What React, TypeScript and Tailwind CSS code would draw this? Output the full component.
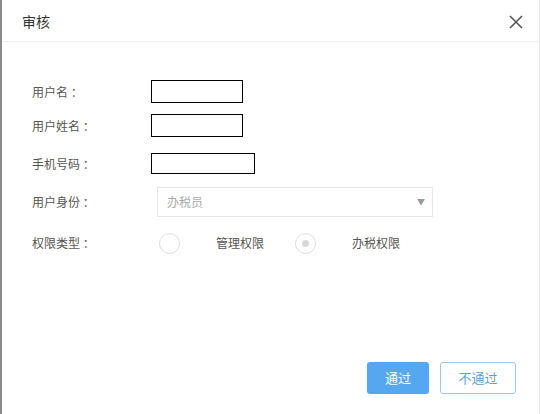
import React from "react";

export default function App() {
  const font = { fontFamily: '"Noto Sans CJK SC", "Microsoft YaHei", sans-serif' };
  return (
    <div className="w-[540px] h-[414px] bg-white border-l-2 border-[#8a8a8a] border-r border-r-[#e8e8e8] flex flex-col" style={font}>
      <div className="h-[42px] border-b border-[#ececec] flex items-center justify-between pl-[20px] pr-[16px]">
        <span className="text-[14px] text-[#333] leading-none">审核</span>
        <svg width="14" height="14" viewBox="0 0 14 14" className="mt-[2px]">
          <path d="M1 1L13 13M13 1L1 13" stroke="#555" strokeWidth="1.6" />
        </svg>
      </div>
      <div className="flex-1 flex flex-col pl-[30px] pt-[38px]">
        <div className="flex items-center h-[23px]">
          <span className="w-[119px] text-[12px] text-[#555]">用户名 ：</span>
          <div className="w-[92px] h-[23px] border border-black" />
        </div>
        <div className="flex items-center h-[23px] mt-[11px]">
          <span className="w-[119px] text-[12px] text-[#555]">用户姓名 ：</span>
          <div className="w-[92px] h-[23px] border border-black" />
        </div>
        <div className="flex items-center h-[21px] mt-[16px]">
          <span className="w-[119px] text-[12px] text-[#555]">手机号码 ：</span>
          <div className="w-[104px] h-[21px] border border-black" />
        </div>
        <div className="flex items-center h-[30px] mt-[13px]">
          <span className="w-[125px] text-[12px] text-[#555]">用户身份 ：</span>
          <div className="w-[276px] h-[30px] border border-[#e6e6e6] flex items-center justify-between pl-[9px] pr-[7px]">
            <span className="text-[12px] text-[#aaa]">办税员</span>
            <span className="text-[8px] text-[#999]">▼</span>
          </div>
        </div>
        <div className="flex items-center h-[22px] mt-[15px]">
          <span className="w-[127px] text-[12px] text-[#555]">权限类型 ：</span>
          <div className="w-[21px] h-[21px] rounded-full border border-[#ddd]" />
          <span className="ml-[36px] text-[12px] text-[#555]">管理权限</span>
          <div className="ml-[31px] w-[21px] h-[21px] rounded-full border border-[#ddd] flex items-center justify-center">
            <div className="w-[7px] h-[7px] rounded-full bg-[#d8d8d8]" />
          </div>
          <span className="ml-[36px] text-[12px] text-[#555]">办税权限</span>
        </div>
        <div className="flex-1" />
        <div className="flex justify-end gap-[11px] pr-[23px] pb-[20px]">
          <button className="w-[62px] h-[32px] rounded-[3px] bg-[#55a8ef] text-white text-[13px]">通过</button>
          <button className="w-[76px] h-[32px] rounded-[3px] border border-[#9cc6ec] bg-white text-[#5a9fe0] text-[13px]">不通过</button>
        </div>
      </div>
    </div>
  );
}
